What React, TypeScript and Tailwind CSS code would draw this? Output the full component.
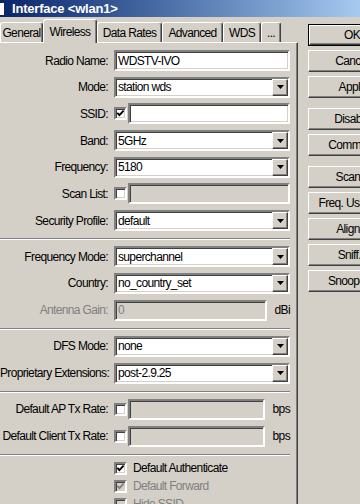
import React from "react";

const sunken =
  "border-2 border-t-[#808080] border-l-[#808080] border-b-white border-r-white shadow-[inset_1px_1px_0_#404040,inset_-1px_-1px_0_#d4d0c8]";
const raised =
  "border border-t-white border-l-white border-b-[#404040] border-r-[#404040] shadow-[inset_-1px_-1px_0_#808080,inset_1px_1px_0_#d4d0c8]";

function Check({ checked, disabled }: { checked?: boolean; disabled?: boolean }) {
  return (
    <div
      className={`w-[13px] h-[13px] shrink-0 flex items-center justify-center ${sunken} ${
        disabled ? "bg-[#d4d0c8]" : "bg-white"
      }`}
    >
      {checked && (
        <svg width="9" height="9" viewBox="0 0 9 9">
          <path
            d="M1.3 3.8 L3.4 6.1 L7.6 1.6"
            fill="none"
            stroke={disabled ? "#808080" : "#000"}
            strokeWidth="1.9"
          />
        </svg>
      )}
    </div>
  );
}

function TextBox({
  value,
  disabled,
  select,
  className = "",
}: {
  value?: string;
  disabled?: boolean;
  select?: boolean;
  className?: string;
}) {
  return (
    <div
      className={`h-[21px] flex items-center ${sunken} ${
        disabled ? "bg-[#d4d0c8] text-[#808080]" : "bg-white text-black"
      } ${className}`}
    >
      <span className="flex-1 pl-[2px] whitespace-nowrap overflow-hidden">{value}</span>
      {select && (
        <div
          className={`w-[16px] h-[17px] bg-[#d4d0c8] flex items-center justify-center ${raised}`}
        >
          <svg width="7" height="4" viewBox="0 0 7 4">
            <polygon points="0,0 7,0 3.5,4" fill="#000" />
          </svg>
        </div>
      )}
    </div>
  );
}

function Row({
  label,
  disabled,
  children,
}: {
  label: string;
  disabled?: boolean;
  children: React.ReactNode;
}) {
  return (
    <div className="grid grid-cols-[108px_176px] gap-x-[6px] items-center h-[21px]">
      <div className={`text-right whitespace-nowrap ${disabled ? "text-[#808080]" : ""}`}>
        {label}
      </div>
      <div className="flex items-center">{children}</div>
    </div>
  );
}

function Separator() {
  return <div className="mt-[7px] mb-[6px] w-[290px] h-[2px] border-t border-t-[#808080] border-b border-b-white" />;
}

function Button({ label, main, className = "" }: { label: string; main?: boolean; className?: string }) {
  return (
    <div className={`h-[22px] ${main ? "border border-black" : ""} ${className}`}>
      <div
        className={`h-full bg-[#d4d0c8] flex items-center justify-center whitespace-nowrap ${raised}`}
      >
        {label}
      </div>
    </div>
  );
}

const tabs = [
  { label: "General", cls: "w-[43px]" },
  { label: "Wireless", cls: "w-[54px]", active: true },
  { label: "Data Rates", cls: "w-[65px]" },
  { label: "Advanced", cls: "w-[61px]" },
  { label: "WDS", cls: "w-[38px]" },
  { label: "...", cls: "w-[20px]" },
];

export default function App() {
  return (
    <div className="w-[360px] h-[504px] overflow-hidden bg-[#d4d0c8] flex flex-col text-[12px] tracking-[-0.65px] text-black font-['Liberation_Sans',Arial,sans-serif]">
      {/* title bar */}
      <div className="h-[17px] shrink-0 flex items-center bg-gradient-to-r from-[#0a246a] to-[#a6caf0]">
        <div className="w-[4px] h-[12px] bg-white" />
        <span className="ml-[8px] text-white font-bold text-[13px] tracking-[-0.2px]">
          Interface &lt;wlan1&gt;
        </span>
      </div>

      <div className="flex-1 flex min-h-0">
        {/* tabs and panel */}
        <div className="w-[298px] shrink-0 flex flex-col">
          <div className="h-[25px] shrink-0 flex items-end">
            {tabs.map((t) =>
              t.active ? (
                <div
                  key={t.label}
                  className={`${t.cls} h-[24px] mb-[-1px] relative z-10 bg-[#d4d0c8] rounded-t-[3px] border-t border-l border-t-white border-l-white border-r border-r-[#404040] shadow-[inset_-1px_0_0_#808080] flex justify-center pt-[3px] whitespace-nowrap`}
                >
                  {t.label}
                </div>
              ) : (
                <div
                  key={t.label}
                  className={`${t.cls} h-[20px] rounded-t-[3px] border-t border-l border-t-white border-l-white border-r border-r-[#404040] shadow-[inset_-1px_0_0_#808080] flex justify-center items-center whitespace-nowrap`}
                >
                  {t.label}
                </div>
              )
            )}
          </div>

          <div className="flex-1 border-t border-t-white border-r border-r-[#404040] shadow-[inset_-1px_0_0_#808080] pt-[7px]">
            <div className="flex flex-col gap-[5.7px]">
              <Row label="Radio Name:">
                <TextBox value="WDSTV-IVO" className="w-[176px]" />
              </Row>
              <Row label="Mode:">
                <TextBox value="station wds" select className="w-[176px]" />
              </Row>
              <Row label="SSID:">
                <Check checked />
                <TextBox value="" className="flex-1 ml-[1px]" />
              </Row>
              <Row label="Band:">
                <TextBox value="5GHz" select className="w-[176px]" />
              </Row>
              <Row label="Frequency:">
                <TextBox value="5180" select className="w-[176px]" />
              </Row>
              <Row label="Scan List:">
                <Check />
                <TextBox value="" disabled className="flex-1 ml-[1px]" />
              </Row>
              <Row label="Security Profile:">
                <TextBox value="default" select className="w-[176px]" />
              </Row>
            </div>

            <Separator />

            <div className="flex flex-col gap-[5.7px]">
              <Row label="Frequency Mode:">
                <TextBox value="superchannel" select className="w-[176px]" />
              </Row>
              <Row label="Country:">
                <TextBox value="no_country_set" select className="w-[176px]" />
              </Row>
              <Row label="Antenna Gain:" disabled>
                <TextBox value="0" disabled className="w-[153px]" />
                <span className="ml-[8px]">dBi</span>
              </Row>
            </div>

            <Separator />

            <div className="flex flex-col gap-[6px]">
              <Row label="DFS Mode:">
                <TextBox value="none" select className="w-[176px]" />
              </Row>
              <Row label="Proprietary Extensions:">
                <TextBox value="post-2.9.25" select className="w-[176px]" />
              </Row>
            </div>

            <Separator />

            <div className="flex flex-col gap-[6px]">
              <Row label="Default AP Tx Rate:">
                <Check />
                <TextBox value="" disabled className="w-[139px] ml-[1px]" />
                <span className="ml-[8px]">bps</span>
              </Row>
              <Row label="Default Client Tx Rate:">
                <Check />
                <TextBox value="" disabled className="w-[139px] ml-[1px]" />
                <span className="ml-[8px]">bps</span>
              </Row>
            </div>

            <Separator />

            <div className="flex flex-col gap-[5px] pl-[114px]">
              <div className="flex items-center h-[13px]">
                <Check checked />
                <span className="ml-[6px]">Default Authenticate</span>
              </div>
              <div className="flex items-center h-[13px] text-[#808080]">
                <Check checked disabled />
                <span className="ml-[6px]">Default Forward</span>
              </div>
              <div className="flex items-center h-[13px] text-[#808080]">
                <Check disabled />
                <span className="ml-[6px]">Hide SSID</span>
              </div>
            </div>
          </div>
        </div>

        {/* buttons */}
        <div className="w-[88px] shrink-0 ml-[10px] pt-[7px] flex flex-col">
          <Button label="OK" main />
          <Button label="Cancel" className="mt-[4px]" />
          <Button label="Apply" className="mt-[4px]" />
          <Button label="Disable" className="mt-[10px]" />
          <Button label="Comment" className="mt-[4px]" />
          <Button label="Scan..." className="mt-[10px]" />
          <Button label="Freq. Usage..." className="mt-[4px]" />
          <Button label="Align..." className="mt-[4px]" />
          <Button label="Sniff..." className="mt-[4px]" />
          <Button label="Snooper..." className="mt-[4px]" />
        </div>
      </div>
    </div>
  );
}
